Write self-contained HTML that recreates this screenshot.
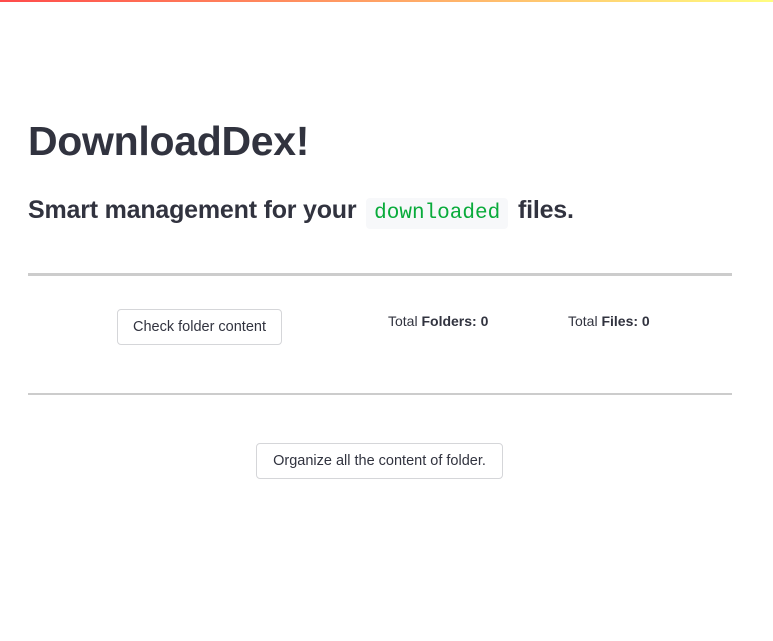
<!DOCTYPE html>
<html><head><style>
body{margin:0;width:773px;height:641px;background:#fff;font-family:"Liberation Sans",sans-serif;color:#31333f;position:relative;overflow:hidden}
.bar{position:absolute;left:0;top:0;width:773px;height:2px;background:linear-gradient(90deg,#ff4b4b,#fffd80)}
.a{position:absolute;white-space:nowrap}
h1{margin:0;position:absolute;left:28px;top:116px;font-size:41px;font-weight:700;letter-spacing:-0.3px;line-height:50px}
.sub{left:28px;top:192px;font-size:25px;font-weight:700;line-height:36px;letter-spacing:-0.2px}
code{font-family:"Liberation Mono",monospace;color:#09ab3b;background:#f7f8fa;font-weight:400;font-size:21px;padding:4px 8px;border-radius:4px;margin:0 3px;letter-spacing:0}
.hr{position:absolute;left:28px;width:704px;background:#ccc}
.btn{position:absolute;border:1px solid #d5d6d9;border-radius:4px;background:#fff;font-size:14.5px;display:flex;align-items:center;justify-content:center;box-sizing:border-box}
.t{font-size:14px;top:313px}
</style></head><body>
<div class="bar"></div>
<h1>DownloadDex!</h1>
<div class="a sub">Smart management for your <code>downloaded</code> files.</div>
<div class="hr" style="top:273px;height:3px"></div>
<div class="btn" style="left:117px;top:309px;width:165px;height:36px">Check folder content</div>
<div class="a t" style="left:388px">Total <b>Folders: 0</b></div>
<div class="a t" style="left:568px">Total <b>Files: 0</b></div>
<div class="hr" style="top:393px;height:2px"></div>
<div class="btn" style="left:256px;top:443px;width:247px;height:36px">Organize all the content of folder.</div>
</body></html>
